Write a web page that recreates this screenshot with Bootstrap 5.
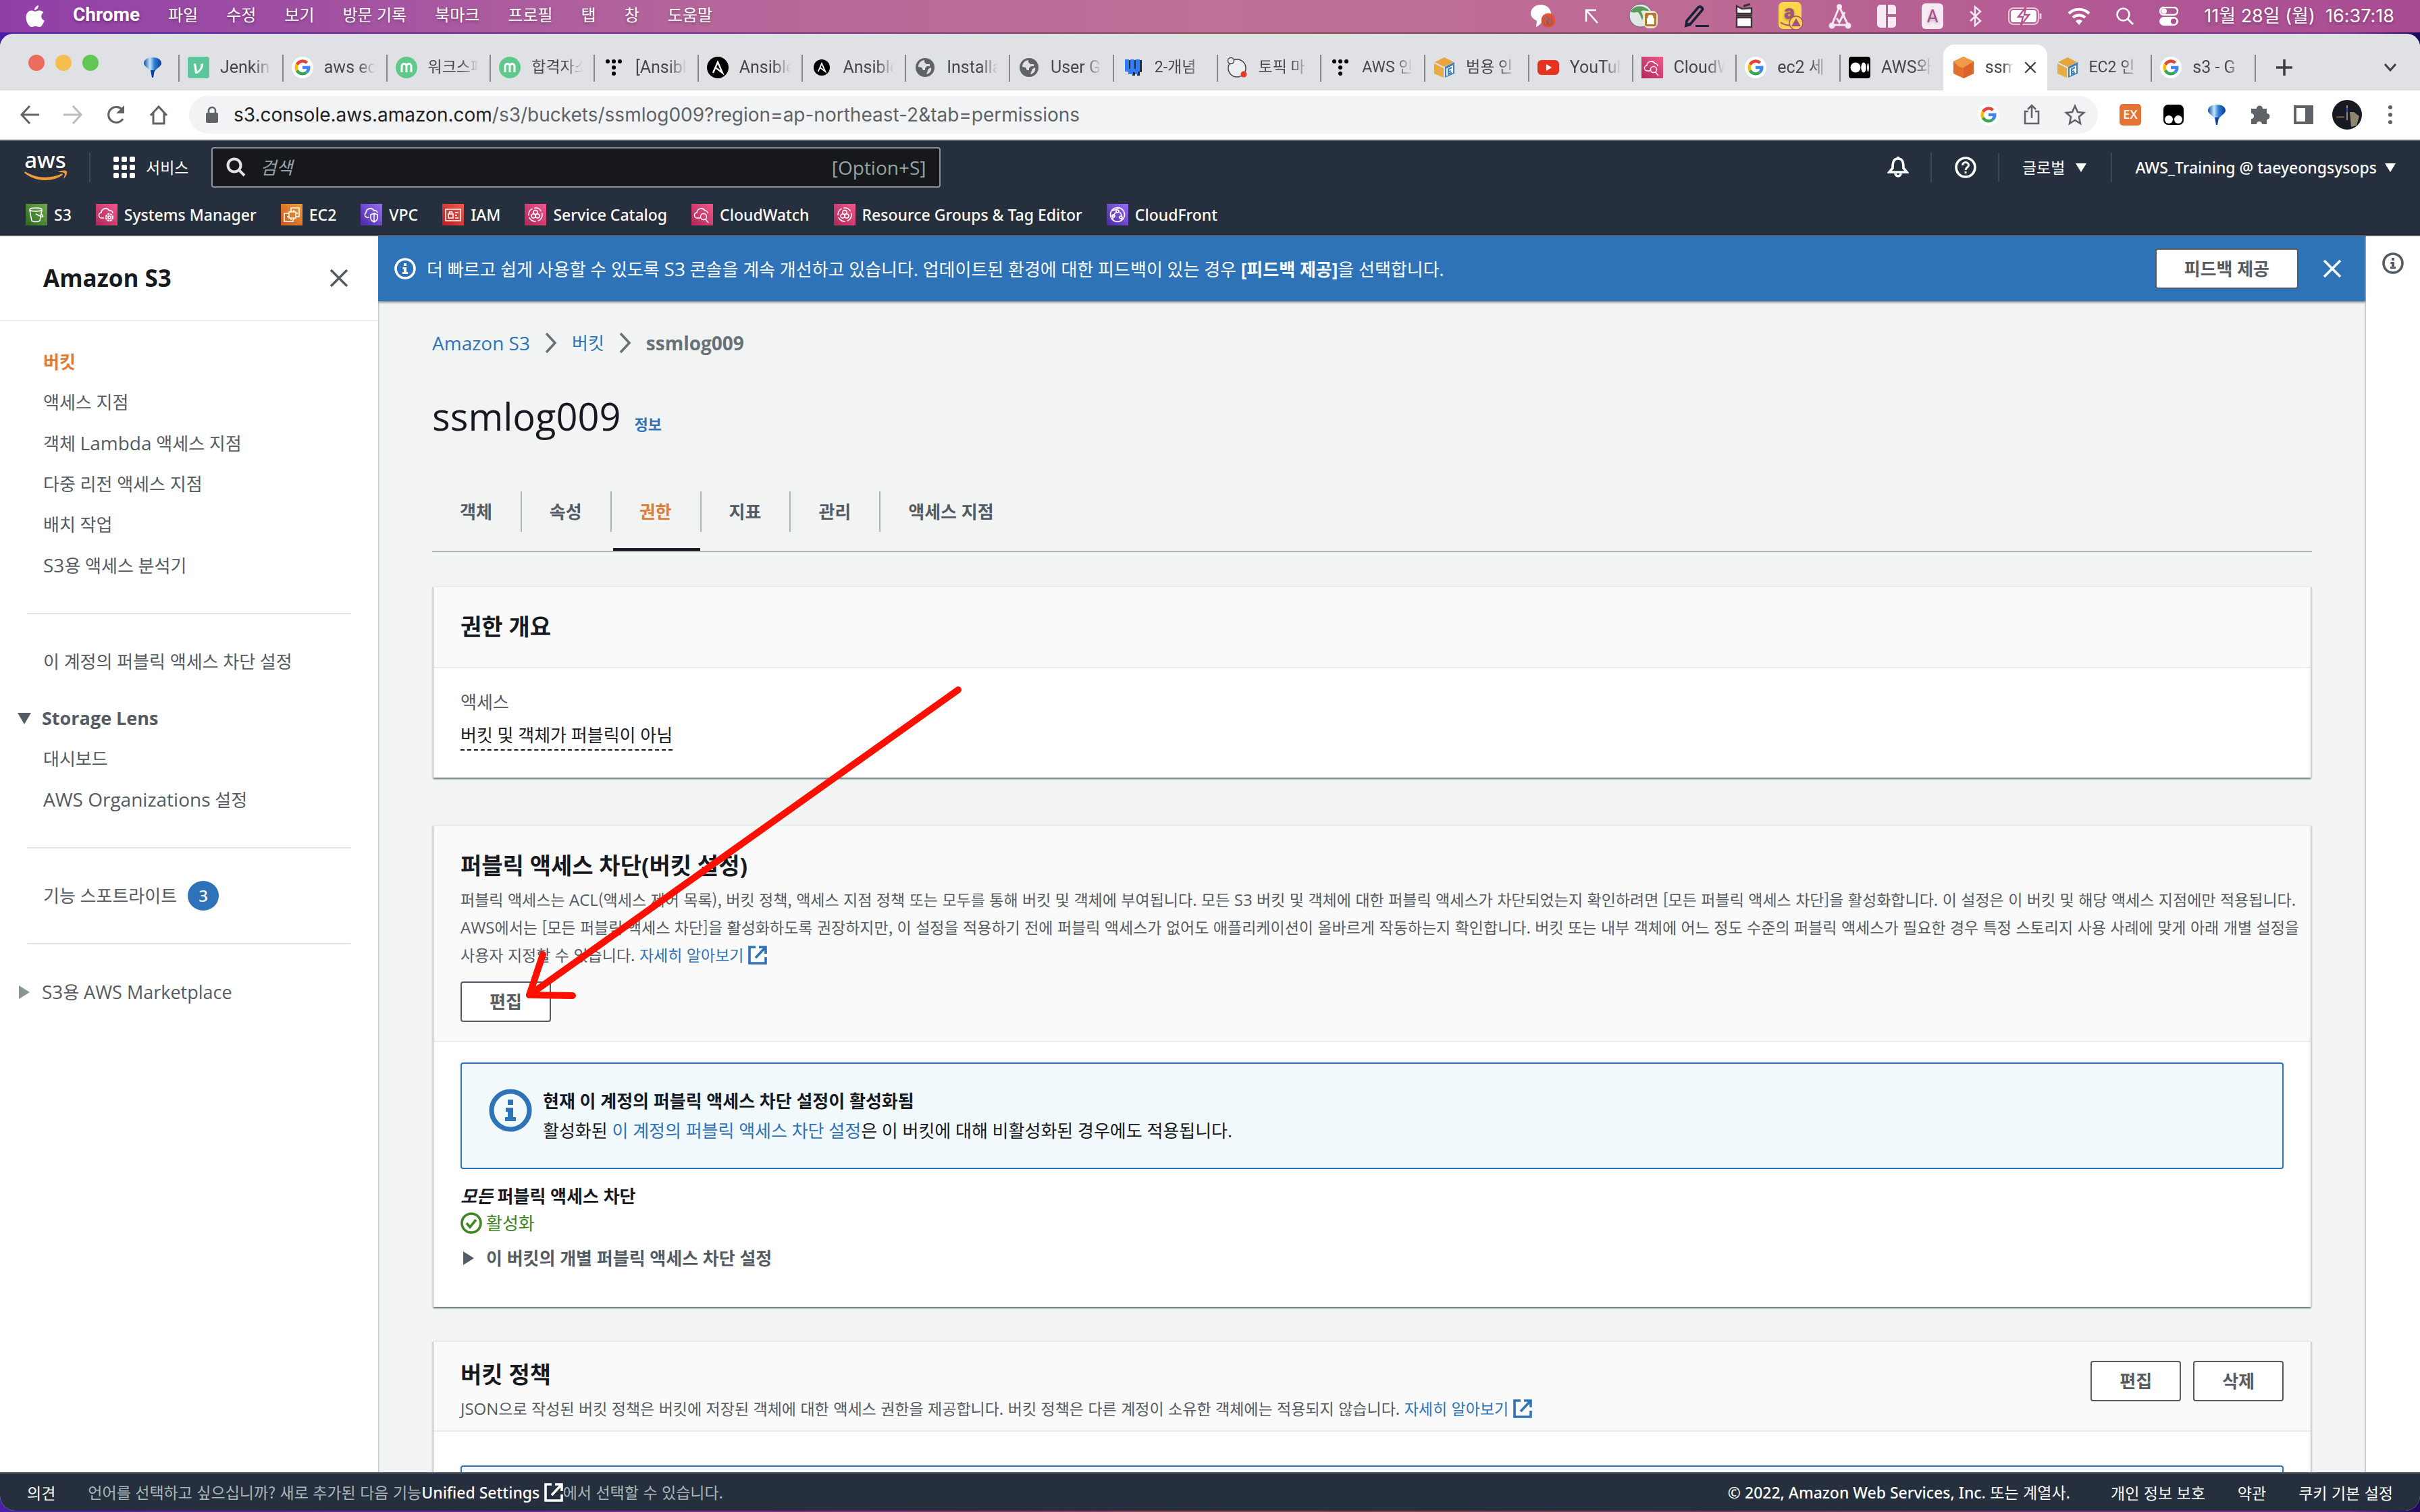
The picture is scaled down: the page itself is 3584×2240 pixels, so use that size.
<!DOCTYPE html>
<html lang="ko">
<head>
<meta charset="utf-8">
<meta name="viewport" content="width=device-width, initial-scale=1">
<title>ssmlog009 - S3 bucket</title>
<link href="https://cdn.jsdelivr.net/npm/bootstrap@5.3.0/dist/css/bootstrap.min.css" rel="stylesheet">
<style>
:root{--ink:#16191f;--gray:#545b64;--blue:#2e73b8;--orange:#e07b35;--navy:#252f3e}
html,body{height:100%}
body{font-family:"Noto Sans","Noto Sans CJK KR",sans-serif;font-size:26px;line-height:44px;color:var(--ink);background:linear-gradient(90deg,#4a1fa5 0,#7b2a8c 30%,#8a4a50 50%,#6c3a58 75%,#7a2a96 97%,#1c0a5c);overflow:hidden}
a{color:var(--blue);text-decoration:none}
svg{display:block;flex:none}
.la{font-family:"Open Sans","Noto Sans",sans-serif;font-size:28px}
.la27{font-family:"Open Sans","Noto Sans",sans-serif;font-size:27px}
.la24{font-family:"Open Sans","Noto Sans",sans-serif;font-size:24px}
.la23{font-family:"Noto Sans",sans-serif;font-size:23px;font-weight:500}
.ui{font-family:Roboto,"Noto Sans CJK KR",sans-serif}
.menubar{height:48px;padding:0 38px;gap:42px;background:linear-gradient(90deg,#8f3fa8 0,#b5659b 28%,#bf7096 50%,#bd6a94 70%,#a94b94 100%);color:#fff;font-size:24px;line-height:40px;text-shadow:0 2px 4px rgba(0,0,0,.3);margin-bottom:2px}
.menubar a{color:#fff;height:44px}
.menubar .appname{font:700 28px/40px Roboto,sans-serif}
.clock{font:400 27px/40px Inter,"Noto Sans CJK KR",sans-serif}
.tray{gap:38px}
.win{border-radius:20px 20px 22px 22px;overflow:hidden;background:#fff;margin-bottom:2px;min-height:0}
.strip{height:84px;background:#dfe1e5;padding-right:34px}
.lights{gap:16px;padding:31px 0 0 42px;width:206px}
.lights i{width:24px;height:24px;border-radius:50%}
.pinned{width:58px;padding:34px 0 0 4px}
.tabset{padding-top:16px;min-width:0}
.tabx{flex:1 1 0;min-width:0;height:68px;padding:18px 16px 0 14px;position:relative;gap:16px;color:#45494d;font-size:25px;line-height:32px}
.tabx:before{content:"";position:absolute;left:0;top:15px;width:2px;height:40px;background:#85888c}
.tabx.noline:before{display:none}
.tabx span{overflow:hidden;white-space:nowrap;flex:1;-webkit-mask-image:linear-gradient(90deg,#000 65%,transparent);mask-image:linear-gradient(90deg,#000 65%,transparent)}
.tabx .hg{font-size:23px}
.tabx.on{background:#fff;border-radius:16px 16px 0 0}
.tabx.on span{flex:0 0 42px}
.tabx.on button{height:32px}
.bare{border:0;background:none;padding:0;color:inherit}
.endline{width:2px;height:40px;background:#85888c;margin-top:15px}
.newtab{margin-left:30px;margin-right:135px}
.toolbar{height:74px;background:#fff;border-bottom:2px solid #d5d7da;padding:0 34px 0 28px;gap:32px}
.omni{background:#f1f3f4;border-radius:28px;height:56px;padding:0 18px 0 24px;margin-left:-2px;color:#5f6368}
.urlhost{color:#202124}
.urltxt{font:400 28px/56px Inter,sans-serif;margin-left:22px}
.awshead{background:var(--navy);height:142px;border-bottom:2px solid #545b64;color:#fff;font-size:23px}
.awshead a,.awshead button{color:#fff}
.toprow{height:80px;padding:0 36px}
.vr2{width:2px;height:44px;background:#414750}
.searchbox{background:#17181c;border:2px solid #879596;border-radius:4px;width:1080px;height:60px;padding:0 20px;color:#95a5a6}
.searchbox input{background:none;border:0;outline:0;font-size:26px;font-style:italic;color:#95a5a6;margin-left:20px;padding:0;font-family:inherit}
.searchbox input::placeholder{color:#95a5a6;opacity:1}
.favs{padding:0 38px;gap:36px;height:60px}
.favs a{gap:10px;font:500 23px/32px "Noto Sans",sans-serif}
.foot{background:var(--navy);border-top:2px solid #545b64;height:57px;color:#fff;font-family:"Noto Sans CJK KR","Noto Sans",sans-serif;font-size:23px;line-height:36px;padding:0 40px}
.foot a{color:#fff}
.foot .dim{font-size:22px}
.dim{color:#aab7b8}
.side{width:560px;background:#fff;color:var(--gray)}
.side a{color:var(--gray);display:block;line-height:60px;padding-left:64px;white-space:nowrap}
.side a.cur{color:var(--orange);font-weight:700}
.side .sidehead{height:126px;border-bottom:2px solid #eaeded;padding:0 44px 0 64px}
.side h2{font:700 35px/44px "Open Sans","Noto Sans",sans-serif;color:var(--ink)}
.side hr{margin:40px;border-top:2px solid #d5dbdb;opacity:.75}
.side .twist{padding-left:26px;gap:16px;display:flex;align-items:center}
.pill3{background:var(--blue);color:#fff;width:46px;height:44px;border-radius:50%;font:500 24px/44px "Noto Sans",sans-serif;text-align:center;margin-left:16px}
.mainpane{background:#f2f4f4;min-width:0;box-shadow:inset 2px 0 2px -1px #b5bcbc}
.flash{background:#2e73b8;color:#fff;height:96px;padding:0 36px 0 24px;box-shadow:0 2px 3px rgba(0,28,36,.5);position:relative}
.btn.btn-aws{background:#fff;border:2px solid #545b64;border-radius:4px;color:#545b64;font-weight:700;font-size:26px;line-height:40px;height:60px;padding:8px 41px}
.inner{padding:40px 80px 0}
.breadcrumb{margin:0;gap:22px;line-height:44px}
.title1{font:400 56px/72px "Open Sans","Noto Sans",sans-serif;margin:50px 0 0}
.infolink{font-weight:700;font-size:22px;margin-left:20px;line-height:48px}
.s3tabs{margin-top:76px;border-bottom:2px solid #aab7b8;height:90px;font-weight:700}
.s3tabs a{color:var(--gray);border-right:2px solid #aab7b8;height:60px;line-height:60px;padding:0 42px 0 41px;position:relative}
.s3tabs a:last-child{border:0}
.s3tabs a.cur{color:var(--orange)}
.s3tabs a.cur:after{content:"";position:absolute;left:2px;right:0;bottom:-28px;height:4px;background:var(--ink)}
.panel{background:#fff;border:0;border-radius:0;border-top:2px solid #eaeded;margin:0 2px;box-shadow:0 2px 2px rgba(0,28,36,.5),2px 2px 2px rgba(0,28,36,.12),-2px 2px 2px rgba(0,28,36,.12)}
.panel .phead{background:#fafafa;border-bottom:2px solid #eaeded}
.panel h3{font-size:34px;line-height:44px;font-weight:700;margin:0}
.desc{font-family:"Noto Sans CJK KR","Noto Sans",sans-serif;font-size:23px;line-height:40px;color:var(--gray);margin:8px 0 0}
.desc.wide{margin-right:-38px}
.desc svg,.foot svg{display:inline-block;vertical-align:-5px}
.note{background:#f2f9fd;border:2px solid var(--blue);border-radius:4px;margin:0;color:var(--ink)}
.dash{border-bottom:2px dashed var(--ink);line-height:42px}
.okline{color:#3f8624}
.arrow{position:absolute;left:760px;top:1000px}
.rail{width:80px;background:#fff;padding-top:24px;box-shadow:-1px 0 2px #aab7b8;position:relative}
</style>
<script src="https://cdn.jsdelivr.net/npm/bootstrap@5.3.0/dist/js/bootstrap.bundle.min.js"></script>
</head>
<body class="d-flex flex-column">
<svg width="0" height="0" class="position-absolute">
<defs>
<linearGradient id="gp" x1="0" y1="1" x2="1" y2="0"><stop offset="0" stop-color="#b0285a"/><stop offset="1" stop-color="#f0588a"/></linearGradient>
<linearGradient id="gg" x1="0" y1="1" x2="1" y2="0"><stop offset="0" stop-color="#2c6a22"/><stop offset="1" stop-color="#70a84a"/></linearGradient>
<linearGradient id="go" x1="0" y1="1" x2="1" y2="0"><stop offset="0" stop-color="#c8591f"/><stop offset="1" stop-color="#f09b38"/></linearGradient>
<linearGradient id="gv" x1="0" y1="1" x2="1" y2="0"><stop offset="0" stop-color="#4a28a4"/><stop offset="1" stop-color="#9b6cf6"/></linearGradient>
<linearGradient id="gr" x1="0" y1="1" x2="1" y2="0"><stop offset="0" stop-color="#b5201f"/><stop offset="1" stop-color="#f25a50"/></linearGradient>
<linearGradient id="gb" x1="0" y1="0" x2="1" y2="0"><stop offset="0" stop-color="#0f4aa8"/><stop offset=".35" stop-color="#c4e6fb"/><stop offset=".6" stop-color="#2f7fd6"/><stop offset="1" stop-color="#0b3a98"/></linearGradient>
<symbol id="google" viewBox="0 0 32 32"><circle cx="16" cy="16" r="16" fill="#fff"/><g fill="none" stroke-width="4.400"><path d="M7.800 11.600A9.400 9.400 0 0 1 22.600 9.200" stroke="#ea4335"/><path d="M7.800 20.400a9.400 9.400 0 0 1 0-8.800" stroke="#fbbc05"/><path d="M22 23.200A9.400 9.400 0 0 1 7.800 20.400" stroke="#34a853"/><path d="M16 16h9.300a9.400 9.400 0 0 1-3.300 7.200" stroke="#4285f4"/></g></symbol>
<symbol id="balloon" viewBox="0 0 32 32"><path d="M16 1c9 0 13 4 13 9 0 4-7 7-10 12h-6C10 17 3 14 3 10c0-5 4-9 13-9z" fill="url(#gb)"/><path d="M13 20h6l-2 11h-2z" fill="#0d3f9c"/></symbol>
<symbol id="tdots" viewBox="0 0 32 32"><g fill="#000"><circle cx="7" cy="7" r="3"/><circle cx="16" cy="7" r="3"/><circle cx="25" cy="7" r="3"/><circle cx="16" cy="16" r="3"/><circle cx="16" cy="25" r="3"/></g></symbol>
<symbol id="mm" viewBox="0 0 32 32"><circle cx="16" cy="16" r="16" fill="#5ec98a"/><path d="M9 23V14a3.500 3.500 0 0 1 7 0v9M16 14a3.500 3.500 0 0 1 7 0v9" fill="none" stroke="#fff" stroke-width="3"/></symbol>
<symbol id="ans" viewBox="0 0 32 32"><circle cx="16" cy="16" r="16" fill="#000"/><path d="M9 24 16 8l7 16L12.500 16" fill="none" stroke="#fff" stroke-width="2.400"/></symbol>
<symbol id="globe" viewBox="0 0 32 32"><circle cx="16" cy="16" r="14" fill="#5f6368"/><path d="M15 5c-6 1-9 5-9 10l5 1 2 4h3v-3l3-3h4v-3h-5l-3-3zM25 16l-4 2-3 8c5-1 8-5 7-10z" fill="#dfe1e5"/></symbol>
<symbol id="box" viewBox="0 0 32 32"><path d="M2 8 16 1l14 7-14 7z" fill="#e8a33d"/><path d="M1 10l14 7v14L1 25z" fill="#e5ab45"/><path d="M17 15l14-7v17l-14 6z" fill="#3a7fb5"/><path d="M19 17.500l10-5v11.500l-10 4.500z" fill="#fff"/><path d="M21 19l6-3M21 23l5-2M21 26.500l6-3M22 18v8" stroke="#3a7fb5" stroke-width="2" fill="none"/></symbol>
<symbol id="cw" viewBox="0 0 32 32"><path d="M0 0h32v32H0z" fill="url(#gp)"/><g fill="none" stroke="#fff" stroke-width="1.500"><path d="M13 21H9a4 4 0 0 1-1-8 6.500 6.500 0 0 1 12-3 4 4 0 0 1 4 4"/><circle cx="18" cy="19" r="4.500"/><path d="m21 23 4 5"/></g></symbol>
<symbol id="cat" viewBox="0 0 32 32"><path d="M0 0h32v32H0z" fill="url(#gp)"/><g fill="none" stroke="#fff" stroke-width="1.500"><circle cx="16" cy="16" r="10" stroke-dasharray="12 3"/><circle cx="16" cy="12.500" r="3"/><circle cx="13" cy="18" r="3"/><circle cx="19" cy="18" r="3"/></g></symbol>
<symbol id="infoc" viewBox="0 0 32 32"><circle cx="16" cy="16" r="14" fill="none" stroke="currentColor" stroke-width="3.600"/><path d="M14 8h4v4h-4zM12.500 14H18v7h2v3h-8v-3h2v-4h-1.500z" fill="currentColor"/></symbol>
<symbol id="xx" viewBox="0 0 28 28"><path d="M2 2l24 24M26 2 2 26" stroke="currentColor" stroke-width="3.600" fill="none"/></symbol>
<symbol id="ext" viewBox="0 0 28 28"><path d="M11 2H2v24h24v-9" fill="none" stroke="currentColor" stroke-width="3.600"/><path d="M16 2h10v10M26 2 11 18" fill="none" stroke="currentColor" stroke-width="3.600"/></symbol>
<symbol id="chev" viewBox="0 0 18 32"><path d="M2 2l13 14L2 30" fill="none" stroke="#687078" stroke-width="3.600"/></symbol>
</defs></svg>

<nav class="menubar d-flex align-items-center flex-shrink-0">
<svg width="28" height="34" viewBox="0 0 28 34"><path fill="#fff" d="M19 1c0 4-3 7-6 7 0-4 3-6.500 6-7zM14 10c2 0 4-2 7-1.500 2 .2 4 1.200 5.500 3-5 3-4 10 1.300 12C26 28 23.500 33 20.500 33c-2.500 0-3.500-1.300-6-1.300S11 33 9 33C5 33 .5 25.500.5 19c0-7 4.300-10.500 8-10.500 2.500 0 4 1.500 5.500 1.500z"/></svg>
<a href="#" class="appname">Chrome</a><a href="#">파일</a><a href="#">수정</a><a href="#">보기</a><a href="#">방문 기록</a><a href="#">북마크</a><a href="#">프로필</a><a href="#">탭</a><a href="#">창</a><a href="#">도움말</a>
<div class="tray d-flex align-items-center ms-auto">
<svg width="38" height="38" viewBox="0 0 38 38"><path d="M16 2c9 0 15 6 15 13s-6 12-13 12c-2 3-5 6-9 8l1-9C4 23 1 19 1 15 1 8 7 2 16 2z" fill="#fff"/><circle cx="27" cy="25" r="10.500" fill="#e25634"/><text x="27" y="31" text-anchor="middle" font-family="Roboto" font-weight="700" font-size="16" fill="#a8636a">N</text></svg>
<svg width="32" height="24" viewBox="0 0 32 24"><path d="M7 20V3h15M8 4l16 18" stroke="#fff" stroke-width="2.600" fill="none"/></svg>
<svg width="44" height="40" viewBox="0 0 44 40"><circle cx="18" cy="19" r="17" fill="#dfe9e4" stroke="#667" stroke-width="1"/><path d="M3 13C8 3 24 2 32 14c-6-3-11-3-14-1 3 3 4 9 2 13-2-6-4-10-6-12-4 0-8 2-11-1z" fill="#5c9a5c"/><rect x="22" y="12" width="21" height="26" rx="8" fill="#efe6d8"/><rect x="24" y="15" width="17" height="20" rx="3" fill="#b07a30"/><path d="M28 24h9v7h-9zM29.500 24v-2a3 3 0 0 1 6 0v2" fill="#fff" stroke="#fff" stroke-width="2"/></svg>
<svg width="38" height="34" viewBox="0 0 38 34"><path d="M4 24 21 4c3-3 8 1 6 4L10 28l-7 3z" stroke="#1a2036" stroke-width="3.600" fill="none"/><path d="M2 24l9 7-9 2zM17 30h20v3H17z" fill="#1a2036"/></svg>
<svg width="26" height="38" viewBox="0 0 26 38"><path d="M2 4l8 4 14-1v8H2zM2 21h22v14H2z" fill="#fff" stroke="#3c3438" stroke-width="2.400"/><path d="M1 18h24M12 4l10-3" stroke="#3c3438" stroke-width="3"/></svg>
<svg width="36" height="42" viewBox="0 0 36 42"><rect width="34" height="40" rx="7" fill="#fbd54a"/><text x="16" y="25" text-anchor="middle" font-family="Roboto" font-weight="900" font-size="30" fill="#a2527d">a</text><path d="M3 30c5 4 12 5 18 3" stroke="#a2527d" stroke-width="2" fill="none"/><circle cx="26" cy="31" r="10" fill="#fbd54a" stroke="#a2527d" stroke-width="1.500"/><path d="M26 24l7 12H19z" fill="#a2527d"/></svg>
<svg width="34" height="38" viewBox="0 0 34 38"><path d="M16 5 5 32h24zM12 22l4 6 8-15" stroke="#f5e6f0" stroke-width="3" fill="none"/><g fill="#f5e6f0"><circle cx="16" cy="5" r="4"/><circle cx="5" cy="33" r="4.500"/><circle cx="29" cy="33" r="4.500"/></g></svg>
<svg width="28" height="34" viewBox="0 0 28 34"><g fill="#f7eaf3"><path d="M5 0h8v34H5a5 5 0 0 1-5-5V5a5 5 0 0 1 5-5zM16 0h7a5 5 0 0 1 5 5v9H16zM16 18h12v11a5 5 0 0 1-5 5h-7z"/></g></svg>
<svg width="32" height="38" viewBox="0 0 32 38"><rect width="32" height="38" rx="6" fill="#f7eaf3"/><text x="16" y="28" text-anchor="middle" font-family="Inter" font-size="25" fill="#a4478b">A</text></svg>
<svg width="20" height="32" viewBox="0 0 20 32"><path d="M2 9l15 14-8 7V2l8 7L2 23" fill="none" stroke="#f7eaf3" stroke-width="2.400"/></svg>
<svg width="50" height="30" viewBox="0 0 50 30"><rect x="1" y="3" width="44" height="24" rx="7" fill="none" stroke="#e8c8da" stroke-width="2"/><rect x="4" y="6" width="38" height="18" rx="4" fill="#fff"/><path d="M26 2 15 16h7l-3 12 12-15h-7z" fill="#fff" stroke="#b4508f" stroke-width="2.400"/><path d="M48 11v8" stroke="#e8c8da" stroke-width="3"/></svg>
<svg width="34" height="26" viewBox="0 0 34 26"><path d="M2 9a21 21 0 0 1 30 0M8 15a13 13 0 0 1 18 0" stroke="#fff" stroke-width="4" fill="none"/><path d="M17 26l-5-6a7 7 0 0 1 10 0z" fill="#fff"/></svg>
<svg width="26" height="26" viewBox="0 0 26 26"><circle cx="10.500" cy="10.500" r="9" fill="none" stroke="#fff" stroke-width="2.600"/><path d="m17 17 8 8" stroke="#fff" stroke-width="3"/></svg>
<svg width="28" height="28" viewBox="0 0 28 28"><rect x="1" y="1" width="26" height="11" rx="5.500" fill="none" stroke="#fff" stroke-width="2.400"/><circle cx="7" cy="6.500" r="4" fill="#fff"/><rect y="15" width="28" height="13" rx="6.500" fill="#fff"/><circle cx="21" cy="21.500" r="4" fill="#a94b94"/></svg>
<span class="clock text-nowrap">11월 28일 (월)&nbsp; 16:37:18</span>
</div>
</nav>

<div class="win d-flex flex-column flex-grow-1">
<div class="strip d-flex ui flex-shrink-0">
<div class="lights d-flex flex-shrink-0"><i style="background:#ed6a5e"></i><i style="background:#f5bf4f"></i><i style="background:#62c554"></i></div>
<div class="pinned flex-shrink-0"><svg width="32" height="32"><use href="#balloon"/></svg></div>
<div class="tabset d-flex flex-grow-1">
<div class="tabx d-flex"><svg width="32" height="32"><rect width="32" height="32" rx="4" fill="#5cc59c"/><path d="M9 10h3l2 12c4-3 6-7 5-11l4-1c1 6-4 12-9 15h-3z" fill="#fff"/></svg><span>Jenkin</span></div>
<div class="tabx d-flex"><svg width="32" height="32"><use href="#google"/></svg><span>aws ec</span></div>
<div class="tabx d-flex"><svg width="32" height="32"><use href="#mm"/></svg><span class="hg">워크스페</span></div>
<div class="tabx d-flex"><svg width="32" height="32"><use href="#mm"/></svg><span class="hg">합격자소</span></div>
<div class="tabx d-flex"><svg width="32" height="32"><use href="#tdots"/></svg><span>[Ansibl</span></div>
<div class="tabx d-flex"><svg width="32" height="32"><use href="#ans"/></svg><span>Ansible</span></div>
<div class="tabx d-flex"><svg width="32" height="32"><use href="#ans" x="4" y="4" width="24" height="24"/></svg><span>Ansible</span></div>
<div class="tabx d-flex"><svg width="32" height="32"><use href="#globe"/></svg><span>Installa</span></div>
<div class="tabx d-flex"><svg width="32" height="32"><use href="#globe"/></svg><span>User G</span></div>
<div class="tabx d-flex"><svg width="32" height="32"><path d="M5 4h6v14h2V4h6v14h2V4h6v18h-3v5h-4v-3h-3v3h-4v-3H9l-4-4z" fill="#222c3c" transform="translate(2 1)"/><path d="M4 4h6v14h2V4h6v14h2V4h6v18h-3v4h-4v-3h-3v3H9v-4H4z" fill="#2f7cf6"/></svg><span class="hg">2-개념</span></div>
<div class="tabx d-flex"><svg width="32" height="32"><circle cx="16" cy="17" r="13" fill="#eceef0" stroke="#444" stroke-width="1.500"/><circle cx="7" cy="6" r="4.500" fill="#eceef0" stroke="#444" stroke-width="1.500"/><circle cx="26" cy="26" r="4.500" fill="#e8362a"/></svg><span class="hg">토픽 마</span></div>
<div class="tabx d-flex"><svg width="32" height="32"><use href="#tdots"/></svg><span class="hg">AWS 인</span></div>
<div class="tabx d-flex"><svg width="32" height="32"><use href="#box"/></svg><span class="hg">범용 인</span></div>
<div class="tabx d-flex"><svg width="32" height="32"><rect y="5" width="32" height="22" rx="6" fill="#e9311f"/><path d="M13 11l8 5-8 5z" fill="#fff"/></svg><span>YouTub</span></div>
<div class="tabx d-flex"><svg width="32" height="32"><use href="#cw"/></svg><span>CloudW</span></div>
<div class="tabx d-flex"><svg width="32" height="32"><use href="#google"/></svg><span>ec2 세</span></div>
<div class="tabx d-flex"><svg width="32" height="32"><rect width="32" height="32" rx="4"/><g fill="#fff"><circle cx="10" cy="16" r="7.500"/><ellipse cx="22" cy="16" rx="3.800" ry="7.500"/><ellipse cx="28.500" cy="16" rx="1.400" ry="6.500"/></g></svg><span>AWS와</span></div>
<div class="tabx d-flex on noline"><svg width="32" height="32"><path d="M1 7 16 0l15 7v18l-15 7L1 25z" fill="#e0702c"/><path d="M1 7 16 0l15 7-8 8-7 2-7-2z" fill="#f09a45"/><path d="M16 16l15-9v18l-15 7z" fill="#dd6428"/></svg><span>ssm</span><button class="bare" aria-label="탭 닫기"><svg width="18" height="18" viewBox="0 0 28 28" color="#3c4043"><use href="#xx"/></svg></button></div>
<div class="tabx d-flex noline"><svg width="32" height="32"><use href="#box"/></svg><span class="hg">EC2 인</span></div>
<div class="tabx d-flex"><svg width="32" height="32"><use href="#google"/></svg><span>s3 - G</span></div>
<div class="endline"></div>
</div>
<button class="bare newtab pt-3" aria-label="새 탭"><svg width="24" height="24"><path d="M12 0v24M0 12h24" stroke="#3c4043" stroke-width="3.600"/></svg></button>
<button class="bare pt-3" aria-label="탭 검색"><svg width="20" height="12"><path d="M2 1l8 9 8-9" stroke="#3c4043" stroke-width="3" fill="none"/></svg></button>
</div>

<div class="toolbar d-flex align-items-center ui flex-shrink-0">
<svg width="32" height="32"><path d="M30 16H5M16 3 4 16l12 13" stroke="#5f6368" stroke-width="3" fill="none"/></svg>
<svg width="32" height="32"><path d="M2 16h25M16 3l12 13-12 13" stroke="#babcbe" stroke-width="3" fill="none"/></svg>
<svg width="32" height="32"><path d="M26 22a11.500 11.500 0 1 1 0-12" stroke="#5f6368" stroke-width="3.200" fill="none"/><path d="M28 2v12H16z" fill="#5f6368"/></svg>
<svg width="30" height="32"><path d="M3 17 15 4l12 13M7 13v16h16V13" stroke="#5f6368" stroke-width="3" fill="none"/></svg>
<div class="omni d-flex align-items-center flex-grow-1">
<svg width="20" height="26"><path d="M5 11V7a5 5 0 0 1 10 0v4" stroke="#5f6368" stroke-width="2.600" fill="none"/><rect x="1" y="10" width="18" height="15" rx="2" fill="#5f6368"/></svg>
<div class="urltxt"><span class="urlhost">s3.console.aws.amazon.com</span>/s3/buckets/ssmlog009?region=ap-northeast-2&amp;tab=permissions</div>
<div class="d-flex align-items-center ms-auto" style="gap:32px">
<svg width="32" height="32"><use href="#google"/></svg>
<svg width="32" height="32"><path d="M11 11H6v18h20V11h-5M16 21V3M10 8l6-6 6 6" stroke="#5f6368" stroke-width="2.600" fill="none"/></svg>
<svg width="32" height="32"><path d="M16 3l4 9 9 1-7 6 2 10-8-5-8 5 2-10-7-6 9-1z" stroke="#5f6368" stroke-width="2.600" fill="none"/></svg>
</div></div>
<svg width="32" height="32"><rect width="32" height="32" rx="5" fill="#e27436"/><text x="16" y="22" text-anchor="middle" font-family="Open Sans" font-weight="600" font-size="18" fill="#fff">EX</text></svg>
<svg width="32" height="32"><rect x="1" y="1" width="30" height="30" rx="7"/><circle cx="9" cy="23" r="6" fill="#fff"/><circle cx="23" cy="23" r="6" fill="#fff"/></svg>
<svg width="32" height="32"><use href="#balloon"/></svg>
<svg width="32" height="32"><path d="M11 7a4.500 4.500 0 0 1 9 0h6v7a4.500 4.500 0 0 1 0 9v7h-7a4 4 0 0 0-8 0H3v-8a4 4 0 0 0 0-8V7z" fill="#5f6368"/></svg>
<div class="d-flex align-items-center" style="gap:27px"><svg width="32" height="32"><path d="M4 4h25v24H4z" stroke="#5f6368" stroke-width="4" fill="none"/><path d="M19 4h10v24H19z" fill="#5f6368"/></svg>
<svg width="44" height="44"><circle cx="22" cy="22" r="22" fill="#171a22"/><path d="M21 8h2v22h-2zM26 18h6l8 6-4 14-8 2z" fill="#8f8670"/><path d="M21 12h2v6h-2z" fill="#3d49c0"/><path d="M6 24h12v3H6z" fill="#5b4a38"/></svg></div>
<svg width="20" height="32" viewBox="6 0 20 32"><g fill="#5f6368"><circle cx="16" cy="5" r="3"/><circle cx="16" cy="16" r="3"/><circle cx="16" cy="27" r="3"/></g></svg>
</div>

<header class="awshead flex-shrink-0">
<div class="toprow d-flex align-items-center">
<a href="#" aria-label="aws"><svg width="64" height="44" viewBox="0 0 64 44"><text x="31" y="23" text-anchor="middle" font-family="Noto Sans" font-weight="500" font-size="33" fill="#fff">aws</text><path d="M1 28c17 11 38 11 55 3l1 2C43 44 16 44 0 30z" fill="#f09b38"/><path d="M50 29c5-3 11-3 13-1 1 2-1 8-5 11 1-4 3-7 1-9-2-1-5-1-9-1z" fill="#f09b38"/></svg></a>
<div class="vr2" style="margin:0 34px 0 32px"></div>
<a href="#" class="d-flex align-items-center gap-3"><svg width="32" height="32"><g fill="#fff"><rect width="8" height="8" rx="2"/><rect x="12" width="8" height="8" rx="2"/><rect x="24" width="8" height="8" rx="2"/><rect y="12" width="8" height="8" rx="2"/><rect x="12" y="12" width="8" height="8" rx="2"/><rect x="24" y="12" width="8" height="8" rx="2"/><rect y="24" width="8" height="8" rx="2"/><rect x="12" y="24" width="8" height="8" rx="2"/><rect x="24" y="24" width="8" height="8" rx="2"/></g></svg>서비스</a>
<div class="searchbox d-flex align-items-center" style="margin-left:34px"><svg width="30" height="30"><circle cx="12" cy="12" r="9.500" stroke="#e0e3e3" stroke-width="4" fill="none"/><path d="m18 18 9 9" stroke="#e0e3e3" stroke-width="4"/></svg><input type="text" class="flex-grow-1" placeholder="검색" aria-label="검색"><span class="la">[Option+S]</span></div>
<div class="d-flex align-items-center ms-auto text-nowrap">
<button class="bare" aria-label="알림"><svg width="32" height="34"><path d="M3 24h26l-5-6c0-8-1-14-8-14s-8 6-8 14z" stroke="#fff" stroke-width="3.600" fill="none"/><path d="M16 1v4M12 26a4 4 0 0 0 8 0" stroke="#fff" stroke-width="3.600" fill="none"/></svg></button>
<div class="vr2" style="margin:0 34px 0 32px"></div>
<button class="bare" aria-label="도움말"><svg width="32" height="32"><circle cx="16" cy="16" r="14" stroke="#fff" stroke-width="3.600" fill="none"/><path d="M11.500 13c0-6 9-6 9 0 0 3-4.500 3-4.500 7M16 22v3" stroke="#fff" stroke-width="3" fill="none"/></svg></button>
<div class="vr2" style="margin:0 34px 0 32px"></div>
<button class="bare d-flex align-items-center gap-3">글로벌<svg width="16" height="13"><path d="M0 0h16L8 13z" fill="#fff"/></svg></button>
<div class="vr2" style="margin:0 34px 0 36px"></div>
<button class="bare d-flex align-items-center gap-2"><span class="la23">AWS_Training @ taeyeongsysops</span><svg width="16" height="13" class="ms-1"><path d="M0 0h16L8 13z" fill="#fff"/></svg></button>
</div></div>
<nav class="favs d-flex align-items-center">
<a href="#" class="d-flex align-items-center"><svg width="32" height="32"><path d="M0 0h32v32H0z" fill="url(#gg)"/><g fill="none" stroke="#fff" stroke-width="1.600"><ellipse cx="15" cy="8.500" rx="9" ry="2.500"/><path d="M6 9l3 16c2 2 10 2 12 0l3-16M15 15l8 4c3 1 4-1 0-4"/></g></svg>S3</a>
<a href="#" class="d-flex align-items-center"><svg width="32" height="32"><path d="M0 0h32v32H0z" fill="url(#gp)"/><g fill="none" stroke="#fff" stroke-width="1.600"><path d="M12 21H9a4 4 0 0 1-1-8 6.500 6.500 0 0 1 12-3 4 4 0 0 1 5 4"/><circle cx="20" cy="20" r="5" stroke-width="2.400" stroke-dasharray="3 1"/><circle cx="20" cy="20" r="2"/></g></svg>Systems Manager</a>
<a href="#" class="d-flex align-items-center"><svg width="32" height="32"><path d="M0 0h32v32H0z" fill="url(#go)"/><g fill="none" stroke="#fff" stroke-width="1.600"><path d="M12 12h10v9H12zM15 9v3M19 9v3M15 21v3M19 21v3M9 14h3M9 19h3M22 14h3M22 19h3M9 14H5v12h13v-3M15 9V6h12v13h-3"/></g></svg>EC2</a>
<a href="#" class="d-flex align-items-center"><svg width="32" height="32"><path d="M0 0h32v32H0z" fill="url(#gv)"/><g fill="none" stroke="#fff" stroke-width="1.600"><path d="M13 20H9a4 4 0 0 1-1-7 6.500 6.500 0 0 1 12-3 4 4 0 0 1 5 3"/><path d="M20 14l5 2v5c0 3-3 5-5 6-2-1-5-3-5-6v-5zM20 14v13"/></g></svg>VPC</a>
<a href="#" class="d-flex align-items-center"><svg width="32" height="32"><path d="M0 0h32v32H0z" fill="url(#gr)"/><g fill="none" stroke="#fff" stroke-width="1.600"><path d="M5 8h22v17H5zM9 15h7v6H9zM10.500 15v-3h4v3M19 13h5M19 17h3M19 21h5"/></g></svg>IAM</a>
<a href="#" class="d-flex align-items-center"><svg width="32" height="32"><use href="#cat"/></svg>Service Catalog</a>
<a href="#" class="d-flex align-items-center"><svg width="32" height="32"><use href="#cw"/></svg>CloudWatch</a>
<a href="#" class="d-flex align-items-center"><svg width="32" height="32"><use href="#cat"/></svg>Resource Groups &amp; Tag Editor</a>
<a href="#" class="d-flex align-items-center"><svg width="32" height="32"><path d="M0 0h32v32H0z" fill="url(#gv)"/><g fill="none" stroke="#fff" stroke-width="1.600"><circle cx="16" cy="16" r="10.500"/><path d="M8 10c5-1 9-2 11-5M9 23c0-6 2-9 6-11M19 12c4 4 4 8 3 12"/><circle cx="16" cy="11" r="2"/><circle cx="10" cy="18" r="2"/><circle cx="21" cy="20" r="2"/></g></svg>CloudFront</a>
</nav>
</header>

<div class="d-flex flex-grow-1 overflow-hidden">
<aside class="side flex-shrink-0">
<div class="sidehead d-flex align-items-center justify-content-between"><h2 class="m-0">Amazon S3</h2><button class="bare" aria-label="닫기"><svg width="28" height="28"><use href="#xx"/></svg></button></div>
<nav class="d-block" style="padding-top:30px">
<a href="#" class="cur">버킷</a><a href="#">액세스 지점</a><a href="#">객체 <span class="la">Lambda</span> 액세스 지점</a><a href="#">다중 리전 액세스 지점</a><a href="#">배치 작업</a><a href="#"><span class="la">S3</span>용 액세스 분석기</a>
<hr>
<a href="#">이 계정의 퍼블릭 액세스 차단 설정</a>
<a href="#" class="twist mt-4"><svg width="20" height="17"><path d="M0 0h20L10 17z" fill="#545b64"/></svg><span class="la27 fw-bold">Storage Lens</span></a>
<a href="#">대시보드</a><a href="#"><span class="la">AWS Organizations</span> 설정</a>
<hr>
<a href="#" class="d-flex align-items-center">기능 스포트라이트<span class="pill3">3</span></a>
<hr>
<a href="#" class="twist"><svg width="20" height="20"><path d="M2 0v20l16-10z" fill="#879596"/></svg><span><span class="la">S3</span>용 <span class="la27">AWS Marketplace</span></span></a>
</nav>
</aside>

<main class="mainpane flex-grow-1 overflow-hidden">
<div class="flash d-flex align-items-center"><svg width="32" height="32"><use href="#infoc"/></svg><span class="ms-3">더 빠르고 쉽게 사용할 수 있도록 <span class="la">S3</span> 콘솔을 계속 개선하고 있습니다. 업데이트된 환경에 대한 피드백이 있는 경우 <b>[피드백 제공]</b>을 선택합니다.</span>
<button class="btn btn-aws ms-auto">피드백 제공</button><button class="bare" style="margin-left:36px" aria-label="닫기"><svg width="28" height="28"><use href="#xx"/></svg></button></div>
<div class="inner">
<nav class="breadcrumb d-flex align-items-center"><a href="#" class="la">Amazon S3</a><svg width="18" height="32"><use href="#chev"/></svg><a href="#">버킷</a><svg width="18" height="32"><use href="#chev"/></svg><span class="la fw-bold" style="color:#687078">ssmlog009</span></nav>
<div class="d-flex align-items-end"><h1 class="title1">ssmlog009</h1><a href="#" class="infolink">정보</a></div>
<nav class="s3tabs d-flex"><a href="#">객체</a><a href="#">속성</a><a href="#" class="cur">권한</a><a href="#">지표</a><a href="#">관리</a><a href="#">액세스 지점</a></nav>

<section class="card panel" style="margin-top:50px">
<div class="phead" style="padding:36px 40px 38px"><h3>권한 개요</h3></div>
<div style="padding:28px 40px 40px"><div style="color:#545b64;margin-bottom:6px">액세스</div><div class="d-flex"><span class="dash">버킷 및 객체가 퍼블릭이 아님</span></div></div>
</section>

<section class="card panel" style="margin-top:70px">
<div class="phead" style="padding:36px 40px 28px"><h3>퍼블릭 액세스 차단(버킷 설정)</h3>
<p class="desc wide">퍼블릭 액세스는 <span class="la24">ACL</span>(액세스 제어 목록), 버킷 정책, 액세스 지점 정책 또는 모두를 통해 버킷 및 객체에 부여됩니다. 모든 <span class="la24">S3</span> 버킷 및 객체에 대한 퍼블릭 액세스가 차단되었는지 확인하려면 [모든 퍼블릭 액세스 차단]을 활성화합니다. 이 설정은 이 버킷 및 해당 액세스 지점에만 적용됩니다.<br><span class="la24">AWS</span>에서는 [모든 퍼블릭 액세스 차단]을 활성화하도록 권장하지만, 이 설정을 적용하기 전에 퍼블릭 액세스가 없어도 애플리케이션이 올바르게 작동하는지 확인합니다. 버킷 또는 내부 객체에 어느 정도 수준의 퍼블릭 액세스가 필요한 경우 특정 스토리지 사용 사례에 맞게 아래 개별 설정을<br>사용자 지정할 수 있습니다. <a href="#">자세히 알아보기 <svg width="28" height="28"><use href="#ext"/></svg></a></p>
<button class="btn btn-aws" style="margin-top:20px">편집</button></div>
<div style="padding:30px 40px 50px">
<div class="alert note d-flex" style="padding:33px 40px"><svg width="64" height="64" viewBox="0 0 32 32" style="color:#2e73b8;margin-top:4px"><use href="#infoc"/></svg><div class="ms-3"><b>현재 이 계정의 퍼블릭 액세스 차단 설정이 활성화됨</b><br>활성화된 <a href="#">이 계정의 퍼블릭 액세스 차단 설정</a>은 이 버킷에 대해 비활성화된 경우에도 적용됩니다.</div></div>
<div class="fw-bold" style="line-height:40px;margin-top:20px"><i>모든</i> 퍼블릭 액세스 차단</div>
<div class="okline d-flex align-items-center" style="line-height:40px;gap:6px"><svg width="32" height="32"><circle cx="16" cy="16" r="14" stroke="#3f8624" stroke-width="3.600" fill="none"/><path d="M9 16l5 6 9-11" stroke="#3f8624" stroke-width="3.600" fill="none"/></svg>활성화</div>
<div class="d-flex align-items-center fw-bold" style="color:#545b64;margin-top:10px;gap:18px"><svg width="20" height="20"><path d="M4 0v20l16-10z" fill="#545b64"/></svg>이 버킷의 개별 퍼블릭 액세스 차단 설정</div>
</div>
</section>

<section class="card panel" style="margin-top:50px">
<div class="phead d-flex justify-content-between" style="padding:26px 40px 12px"><div><h3>버킷 정책</h3>
<p class="desc"><span class="la24">JSON</span>으로 작성된 버킷 정책은 버킷에 저장된 객체에 대한 액세스 권한을 제공합니다. 버킷 정책은 다른 계정이 소유한 객체에는 적용되지 않습니다. <a href="#">자세히 알아보기 <svg width="28" height="28"><use href="#ext"/></svg></a></p></div>
<div class="d-flex" style="gap:18px;padding-top:2px"><button class="btn btn-aws">편집</button><button class="btn btn-aws">삭제</button></div></div>
<div style="padding:50px 40px"><div class="alert note" style="padding:34px 40px">&nbsp;</div></div>
</section>
</div>
</main>
<div class="rail flex-shrink-0 d-flex justify-content-center align-items-start"><svg width="32" height="32" color="#545b64"><use href="#infoc"/></svg></div>
</div>

<footer class="foot d-flex align-items-center text-nowrap flex-shrink-0">
<a href="#">의견</a><span class="dim" style="margin-left:48px;font-size:23px">언어를 선택하고 싶으십니까? 새로 추가된 다음 기능<a href="#"><span class="la23">Unified Settings</span> <svg width="28" height="28"><use href="#ext"/></svg></a>에서 선택할 수 있습니다.</span>
<span class="ms-auto"><span class="la23">© 2022, Amazon Web Services, Inc.</span> 또는 계열사.</span><a href="#" style="margin-left:60px">개인 정보 보호</a><a href="#" style="margin-left:48px">약관</a><a href="#" style="margin-left:48px">쿠키 기본 설정</a>
</footer>
</div>
<svg class="arrow" width="680" height="500"><g stroke="#ff0f00" fill="none" stroke-linecap="round"><path d="M659 22 24 474" stroke-width="10"/><path d="M44 414 24 474 88 475" stroke-width="10" stroke-linejoin="round"/></g></svg>
</body>
</html>
